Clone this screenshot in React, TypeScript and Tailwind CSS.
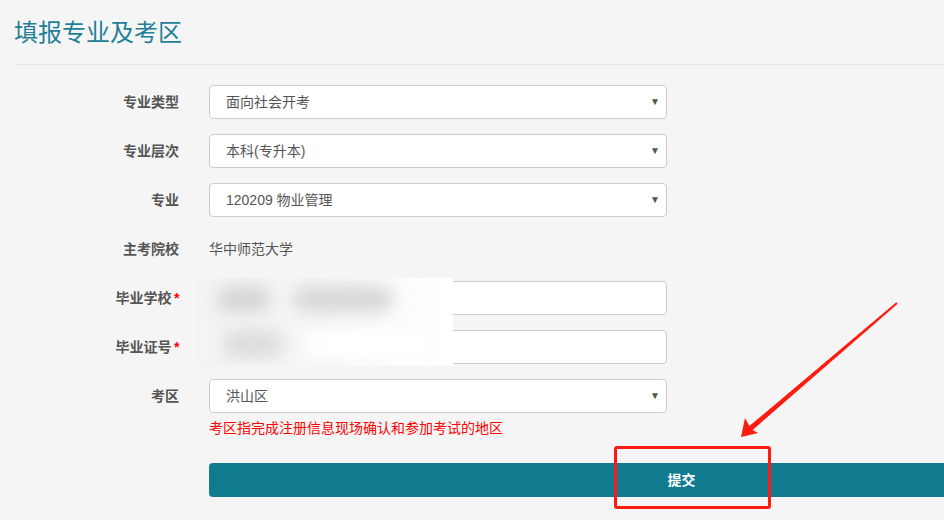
import React from "react";

const font = {
  fontFamily: '"Liberation Sans", "Noto Sans CJK SC", sans-serif',
};

type Row =
  | { kind: "select"; label: string; value: string }
  | { kind: "text"; label: string; value: string }
  | { kind: "input"; label: string; required?: boolean };

const rows: Row[] = [
  { kind: "select", label: "专业类型", value: "面向社会开考" },
  { kind: "select", label: "专业层次", value: "本科(专升本)" },
  { kind: "select", label: "专业", value: "120209 物业管理" },
  { kind: "text", label: "主考院校", value: "华中师范大学" },
  { kind: "input", label: "毕业学校", required: true },
  { kind: "input", label: "毕业证号", required: true },
  { kind: "select", label: "考区", value: "洪山区" },
];

function SelectBox({ value }: { value: string }) {
  return (
    <div className="flex h-[34px] w-[458px] items-center justify-between rounded-[4px] border border-[#cccccc] bg-white pl-[16px] pr-[6px] text-[14px] text-[#555555]">
      <span>{value}</span>
      <span className="text-[10px] leading-none text-[#555555]">▼</span>
    </div>
  );
}

function FormRow({ row }: { row: Row }) {
  return (
    <div className="flex h-[34px] items-center gap-[30px]">
      <div className="w-[165px] text-right text-[14px] font-bold text-[#555555]">
        {row.label}
        {row.kind === "input" && row.required && (
          <span className="ml-[2px] italic text-[#ff0000]">*</span>
        )}
      </div>
      {row.kind === "select" && <SelectBox value={row.value} />}
      {row.kind === "text" && (
        <span className="text-[14px] text-[#555555]">{row.value}</span>
      )}
      {row.kind === "input" && (
        <div className="h-[34px] w-[458px] rounded-[4px] border border-[#cccccc] bg-white" />
      )}
    </div>
  );
}

export default function App() {
  return (
    <div
      className="relative h-[520px] w-[944px] overflow-hidden bg-[#f5f5f5]"
      style={font}
    >
      <div className="pl-[14px]">
        {/* Header */}
        <h1 className="pt-[17px] text-[24px] font-normal leading-[32px] text-[#1f7f96]">
          填报专业及考区
        </h1>
        <div className="mt-[15px] border-t border-[#e6e6e6]" />

        {/* Form */}
        <div className="mt-[20px] flex flex-col gap-[15px]">
          {rows.map((row) => (
            <FormRow key={row.label} row={row} />
          ))}
        </div>
        <div className="ml-[195px] mt-[5px] text-[14px] leading-[20px] text-[#ff0000]">
          考区指完成注册信息现场确认和参加考试的地区
        </div>
        <button className="ml-[195px] mt-[25px] h-[34px] w-[945px] rounded-[4px] bg-[#107a8f] text-[14px] font-bold text-white">
          提交
        </button>
      </div>

      {/* Blurred privacy overlay */}
      <div className="absolute left-[197px] top-[278px] h-[88px] w-[256px] overflow-hidden bg-gradient-to-r from-[#f3f3f3] via-[#f6f6f6] to-[#ffffff]">
        <div className="flex h-full flex-col justify-between px-[20px] py-[8px] blur-[8px]">
          <div className="flex gap-[22px]">
            <div className="h-[26px] w-[54px] rounded-full bg-[#d6d6d6]" />
            <div className="h-[26px] w-[100px] rounded-full bg-[#d8d8d8]" />
          </div>
          <div className="flex gap-[20px] pl-[6px]">
            <div className="h-[28px] w-[64px] rounded-full bg-[#dcdcdc]" />
            <div className="h-[28px] w-[140px] rounded-full bg-[#ffffff]" />
          </div>
        </div>
      </div>

      {/* Annotation: red box */}
      <div className="absolute left-[614px] top-[446px] h-[63px] w-[157px] rounded-[3px] border-[3px] border-[#ff1b10]" />

      {/* Annotation: red arrow */}
      <svg
        className="pointer-events-none absolute left-0 top-0"
        width="944"
        height="520"
        viewBox="0 0 944 520"
      >
        <polygon
          points="896.3,302.2 749.4,426.1 745,418 741,437 758,433 752.6,429.9 897.7,303.8"
          fill="#ff1b10"
        />
      </svg>
    </div>
  );
}
